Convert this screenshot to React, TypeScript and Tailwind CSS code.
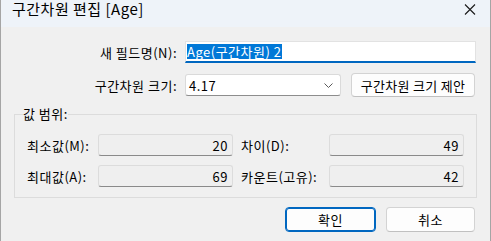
export default function App() {
  const field =
    "flex h-[22px] w-[135px] items-center justify-end rounded-[3px] border border-[#dcdcdc] border-b-[#8a8a8a] bg-[#efefef] pr-[4px]";

  return (
    <div className="h-[241px] w-[491px] overflow-hidden bg-[#f0f0f0] font-['Noto_Sans_CJK_KR',sans-serif] text-[13px] leading-[17px] tracking-[0.5px] text-black">
      <div className="flex h-full flex-col border-x border-[#a5a5a5]">
        {/* Title bar */}
        <div className="flex h-[27px] shrink-0 items-start justify-between bg-[#eef3f9] pl-[11px] pr-[14px]">
          <span className="pt-[1px] text-[15px] leading-[16px]">구간차원 편집 [Age]</span>
          <svg
            className="mt-[4px]"
            width="12"
            height="11"
            viewBox="0 0 12 11"
            fill="none"
            stroke="#1a1a1a"
            strokeWidth="1.1"
          >
            <path d="M1 0.5 L11 10.5 M11 0.5 L1 10.5" />
          </svg>
        </div>

        <div className="flex flex-col pl-[13px] pr-[14px]">
          {/* New field name */}
          <div className="mt-[14px] flex h-[22px] items-center">
            <span className="w-[163px] text-right">새 필드명(N):</span>
            <div className="ml-[8px] flex h-[22px] w-[291px] items-center border border-[#e2e2e2] border-b-2 border-b-[#0067c0] bg-white pl-[1px]">
              <span className="h-[15px] bg-[#0078d7] leading-[15px] text-white">
                Age(구간차원) 2
              </span>
            </div>
          </div>

          {/* Bin size */}
          <div className="mt-[10px] flex h-[24px] items-center">
            <span className="w-[163px] text-right">구간차원 크기:</span>
            <div className="ml-[8px] flex h-[22px] w-[156px] items-center justify-between rounded-[3px] border border-[#dadada] border-b-[#8d8d8d] bg-white pl-[3px] pr-[7px]">
              <span>4.17</span>
              <svg width="9" height="5" viewBox="0 0 9 5" fill="none" stroke="#5a5a5a" strokeWidth="1">
                <path d="M0.5 0.5 L4.5 4.5 L8.5 0.5" />
              </svg>
            </div>
            <button
              type="button"
              className="ml-[10px] h-[24px] w-[124px] rounded-[4px] border border-[#d3d3d3] border-b-[#c0c0c0] bg-[#fdfdfd] tracking-[0.3px]"
            >
              구간차원 크기 제안
            </button>
          </div>

          {/* Value range */}
          <fieldset className="mt-[9px] w-[463px] border border-[#dcdcdc] px-[12px] pb-[10px] pt-[12px]">
            <legend className="-ml-[4px] px-[0px] leading-[16px]">값 범위:</legend>
            <div className="flex flex-col gap-[9px]">
              <div className="flex items-center">
                <span className="w-[71px]">최소값(M):</span>
                <div className={field}>20</div>
                <span className="ml-[8px] w-[88px]">차이(D):</span>
                <div className={field}>49</div>
              </div>
              <div className="flex items-center">
                <span className="w-[71px]">최대값(A):</span>
                <div className={field}>69</div>
                <span className="ml-[8px] w-[88px]">카운트(고유):</span>
                <div className={field}>42</div>
              </div>
            </div>
          </fieldset>

          {/* Buttons */}
          <div className="mt-[9px] flex justify-end pr-[1px]">
            <button
              type="button"
              className="h-[25px] w-[91px] rounded-[4px] border border-[#0067c0] bg-[#fdfdfd] shadow-[inset_0_0_0_1px_#0067c0]"
            >
              확인
            </button>
            <button
              type="button"
              className="ml-[10px] h-[25px] w-[89px] rounded-[4px] border border-[#d3d3d3] border-b-[#c0c0c0] bg-[#fdfdfd]"
            >
              취소
            </button>
          </div>
        </div>
      </div>
    </div>
  );
}
